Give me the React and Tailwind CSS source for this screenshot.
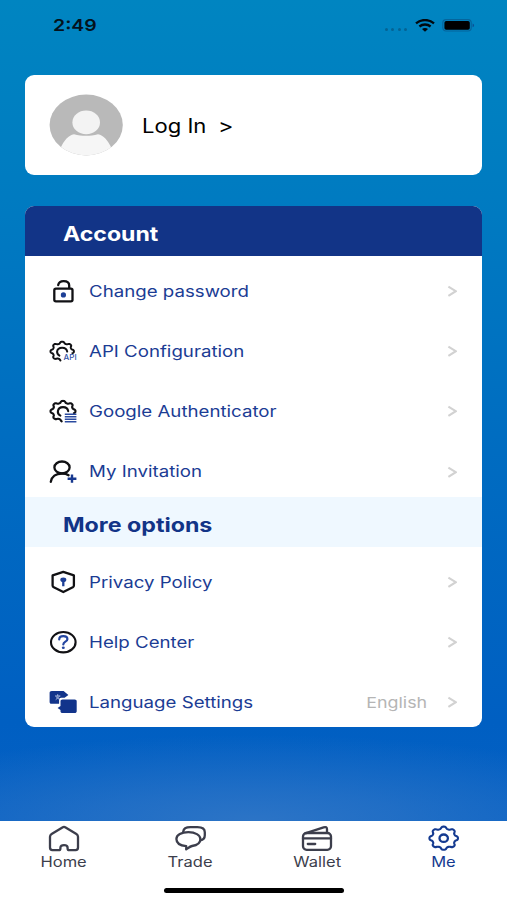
import clsx from "clsx";

// builds a gear outline from `from` to `to` degrees (clockwise, 0 = right)
function gearPath(cx, cy, rx, ry, from = 0, to = 360) {
  const points = [];
  for (let deg = from; deg <= to; deg += 3) {
    const t = (deg * Math.PI) / 180;
    const r = 0.9 + 0.1 * Math.tanh(1.5 * Math.cos(8 * t));
    points.push(`${(cx + rx * r * Math.cos(t)).toFixed(2)} ${(cy + ry * r * Math.sin(t)).toFixed(2)}`);
  }
  return `M${points.join("L")}${to - from >= 360 ? "Z" : ""}`;
}

function RowIcon({ children }) {
  return (
    <svg
      viewBox="0 0 28 24"
      className="h-6 w-7 shrink-0"
      fill="none"
      stroke="#111114"
      strokeWidth="2.3"
      strokeLinecap="round"
      strokeLinejoin="round"
      aria-hidden
    >
      {children}
    </svg>
  );
}

function LockIcon() {
  return (
    <RowIcon>
      <rect x="5.3" y="9.6" width="18.2" height="12.8" rx="1.6" />
      <path d="M9.2 6C9.7 3.6 11.8 2.2 14.6 2.2C18 2.2 20.2 3.9 20.2 6.6V9.2" />
      <circle cx="14.4" cy="15.9" r="2.6" fill="#1d3f96" stroke="none" />
    </RowIcon>
  );
}

function ApiIcon() {
  return (
    <RowIcon>
      <path d={gearPath(13.2, 12.4, 11.8, 9.8, 99, 372)} strokeWidth="2" />
      <path d="M10.4 16.6C8.6 15.6 7.9 14.2 8.1 12.4C8.5 10.1 10.5 8.7 13.1 8.7C15.7 8.7 17.8 10.1 18.2 12.6" strokeWidth="2" />
      <text
        x="14.6"
        y="21"
        fontSize="7.8"
        textLength="13"
        lengthAdjust="spacingAndGlyphs"
        fill="#3152a5"
        stroke="none"
        className="font-['Inter',sans-serif] font-medium"
      >
        API
      </text>
    </RowIcon>
  );
}

function AuthenticatorIcon() {
  return (
    <RowIcon>
      <path d={gearPath(14, 12.2, 12.6, 10.4, 96, 372)} strokeWidth="2.1" />
      <path d="M11.4 16.6C9.4 15.6 8.6 14 8.9 12.2C9.3 9.6 11.4 8.1 14 8.1C16.8 8.1 18.8 9.6 19.2 12.2" strokeWidth="2.1" />
      <path d="M15.8 15.2H27.4M15.8 17.7H27.4M15.8 20.2H27.4M15.8 22.7H27.4" stroke="#2a4a9f" strokeWidth="1.5" strokeLinecap="butt" />
    </RowIcon>
  );
}

function InviteIcon() {
  return (
    <RowIcon>
      <ellipse cx="13" cy="7.4" rx="7.6" ry="5.9" />
      <path d="M1.8 21.8C2.6 16.8 6.8 13.5 13 13.5C15.8 13.5 18 14.1 19.6 15.2" />
      <path d="M23 14.6V22.8M18.6 18.7H27.4" stroke="#17388f" strokeWidth="2.4" strokeLinecap="butt" />
    </RowIcon>
  );
}

function ShieldIcon() {
  return (
    <RowIcon>
      <path d="M14.3 1.9L24.9 5.4V15.4C24.9 16.2 24.5 16.8 23.8 17.2L14.3 22L4.8 17.2C4 16.8 3.6 16.2 3.6 15.4V5.4Z" />
      <ellipse cx="14.3" cy="9.8" rx="3" ry="2.3" fill="#1d3f96" stroke="none" />
      <path d="M14.3 10V16.2" stroke="#1d3f96" strokeWidth="2.3" strokeLinecap="butt" />
    </RowIcon>
  );
}

function HelpIcon() {
  return (
    <RowIcon>
      <ellipse cx="14.3" cy="12.2" rx="12.3" ry="10.2" strokeWidth="2.1" />
      <path d="M10.2 9.4C10.2 7.3 11.8 6.2 14.3 6.2C16.8 6.2 18.4 7.4 18.4 9.2C18.4 11.7 14.3 11.7 14.3 14.4" stroke="#2446a0" strokeWidth="2.2" />
      <ellipse cx="14.3" cy="17.7" rx="1.5" ry="1.3" fill="#2446a0" stroke="none" />
    </RowIcon>
  );
}

function LanguageIcon() {
  return (
    <RowIcon>
      <g fill="#12348b" stroke="none">
        <path d="M2.8 1H14.6L19.4 5L15.6 7.8H12.2C10.8 7.8 10.1 8.6 10.1 9.8V13.8H2.8C1.4 13.8 0.6 13.1 0.6 11.9V2.9C0.6 1.7 1.4 1 2.8 1Z" />
        <path d="M13.6 9.4H25.6C27 9.4 27.7 10.1 27.7 11.3V21.2C27.7 22.4 27 23 25.6 23H13.6C12.2 23 11.5 22.4 11.5 21.2V20L8.6 18L11.5 16V11.3C11.5 10.1 12.2 9.4 13.6 9.4Z" />
      </g>
      <path d="M6.4 6H11M8.7 4.6V6M7 9.4L10.4 6.4M7.2 6.8L10 9.2" stroke="#a9b8dc" strokeWidth="1" />
    </RowIcon>
  );
}

function Chevron() {
  return (
    <svg viewBox="0 0 10 12" className="h-3 w-2.5 shrink-0" fill="none" stroke="#d2d2d2" strokeWidth="2.1" aria-hidden>
      <path d="M1.4 1.6L8.8 6.2L1.4 10.8" />
    </svg>
  );
}

const ACCOUNT_ROWS = [
  { label: "Change password", Icon: LockIcon },
  { label: "API Configuration", Icon: ApiIcon },
  { label: "Google Authenticator", Icon: AuthenticatorIcon },
  { label: "My Invitation", Icon: InviteIcon },
];

const MORE_ROWS = [
  { label: "Privacy Policy", Icon: ShieldIcon },
  { label: "Help Center", Icon: HelpIcon },
  { label: "Language Settings", Icon: LanguageIcon, value: "English" },
];

function MenuRow({ label, Icon, value }) {
  return (
    <li className="flex h-[60.2px] items-center pt-[10px] pr-[25px] pl-6">
      <Icon />
      <span className="mt-px ml-3 origin-left scale-x-[1.205] whitespace-nowrap text-[15.5px] text-[#1b3c94]">
        {label}
      </span>
      <span className="mt-0.5 mr-5 ml-auto origin-right scale-x-[1.19] text-[15px] text-[#b5b5b5]">{value}</span>
      <Chevron />
    </li>
  );
}

function StatusBar() {
  return (
    <div className="flex h-[50px] items-center justify-between pr-8 pl-[53px]">
      <span className="origin-left scale-x-[1.18] text-[16.5px] font-semibold text-[#04121c]">2:49</span>
      <div className="flex items-center">
        <div className="mt-2 mr-2 flex gap-[3.5px]">
          {[0, 1, 2, 3].map((n) => (
            <span key={n} className="h-[3px] w-[3px] rounded-full bg-[#046394]" />
          ))}
        </div>
        <svg viewBox="0 0 20 13" className="h-[13px] w-5" fill="none" stroke="#02090f" strokeWidth="2.3" aria-hidden>
          <path d="M1 4.4C6 -0.1 14 -0.1 19 4.4" />
          <path d="M4.4 7.5C7.6 4.8 12.4 4.8 15.6 7.5" />
          <path d="M7 10L10 12.8L13 10C11.4 8.6 8.6 8.6 7 10Z" fill="#02090f" stroke="none" />
        </svg>
        <svg viewBox="0 0 33 13" className="ml-[7px] h-[13px] w-[33px]" aria-hidden>
          <rect x="0.8" y="0.6" width="28.4" height="11.4" rx="3.2" fill="none" stroke="#05659c" strokeWidth="1.2" />
          <rect x="2.4" y="1.9" width="25.4" height="8.8" rx="1.8" fill="#000" />
          <path d="M30.6 4.4C32.6 5 32.6 7.6 30.6 8.2Z" fill="#0a4f96" />
        </svg>
      </div>
    </div>
  );
}

function Avatar() {
  return (
    <svg viewBox="0 0 74 62" className="h-[62px] w-[74px] shrink-0" aria-hidden>
      <clipPath id="avatar">
        <ellipse cx="37.2" cy="31" rx="36.6" ry="30.4" />
      </clipPath>
      <g clipPath="url(#avatar)">
        <rect width="74" height="62" fill="#b9b9b9" />
        <path d="M12 53C15 46.4 19.6 41.4 25 40.2C29 41.2 33 41.8 37 41.8C41 41.8 45 41.2 49 40.2C54.4 41.4 59 46.4 62 53V62H12Z" fill="#f6f6f6" />
      </g>
      <ellipse cx="37.2" cy="28.4" rx="13.8" ry="11.9" fill="#f3f3f3" />
    </svg>
  );
}

function TabIcon({ children }) {
  return (
    <svg
      viewBox="0 0 32 28"
      className="h-7 w-8"
      fill="none"
      stroke="currentColor"
      strokeWidth="2.3"
      strokeLinecap="round"
      strokeLinejoin="round"
      aria-hidden
    >
      {children}
    </svg>
  );
}

const TABS = [
  {
    label: "Home",
    icon: (
      <path d="M14.4 3.4C15.4 2.8 16.6 2.8 17.6 3.4L28.4 10C29.6 10.8 30 11.6 30 12.8V23.6C30 25.4 29.2 26.2 27.6 26.2H21.4C20.1 26.2 19.6 25.6 19.6 24.4V23.8C19.6 22 18.2 21.2 16 21.2C13.8 21.2 12.4 22 12.4 23.8V24.4C12.4 25.6 11.9 26.2 10.6 26.2H4.4C2.8 26.2 2 25.4 2 23.6V12.8C2 11.6 2.4 10.8 3.6 10Z" />
    ),
  },
  {
    label: "Trade",
    icon: (
      <>
        <path d="M13.4 8.2C20.2 8.2 25.4 11 25.4 15.2C25.4 18.8 22 21.2 17 22C15 22.4 14 23.4 11.2 25.4V22.2C5.2 21.6 1.4 18.8 1.4 15C1.4 11 6.4 8.2 13.4 8.2Z" />
        <path d="M8.2 7.6C8.6 4.6 11.4 3.2 15.4 3.2H22.4C27 3.2 29.8 5 29.8 8.2V11.2C29.8 14 28 15.8 25.2 16.4" />
      </>
    ),
  },
  {
    label: "Wallet",
    icon: (
      <>
        <rect x="2" y="9" width="28" height="16.8" rx="3.6" />
        <path d="M2 14.4H30M6.8 20H14.2" />
        <path d="M5 9.2L22.6 3.3C25 2.6 26 3.4 26 5.2V8.6" />
      </>
    ),
  },
  {
    label: "Me",
    active: true,
    icon: (
      <>
        <path d={gearPath(15.7, 14.2, 14.4, 11.7)} strokeWidth="2.1" />
        <ellipse cx="15.7" cy="14.2" rx="4.2" ry="3.7" />
      </>
    ),
  },
];

function TabBar() {
  return (
    <nav className="relative flex h-[79px] bg-white">
      {TABS.map(({ label, icon, active }) => (
        <button
          key={label}
          type="button"
          className={clsx(
            "flex flex-1 flex-col items-center pt-[3px] pl-px",
            active ? "text-[#143a90]" : "text-[#3c3e4c]"
          )}
        >
          <TabIcon>{icon}</TabIcon>
          <span className="mt-px mr-px scale-x-[1.18] text-[14px] leading-[18px]">{label}</span>
        </button>
      ))}
      <div className="absolute bottom-[7.5px] left-[164px] h-[5px] w-[180px] rounded-full bg-black" />
    </nav>
  );
}

export default function App() {
  return (
    <div className="flex h-[900px] w-full flex-col overflow-hidden bg-white font-['Inter',sans-serif]">
      <main className="flex-1 bg-[radial-gradient(ellipse_85%_10.5%_at_50%_100%,#2c74c6_0%,#2c74c6b3_35%,#2c74c600_100%),linear-gradient(to_bottom,#0085c1_0%,#007bc1_24%,#006cc1_55%,#005fc2_88%,#0660c4_100%)]">
        <StatusBar />

        <section className="mx-[25.3px] mt-[25.4px] flex h-[100px] items-center rounded-[9px] bg-white pl-6">
          <Avatar />
          <button type="button" className="mt-0.5 ml-[19px] flex text-[19.5px] text-black">
            <span className="w-[75.5px] text-left">
              <span className="inline-block origin-left scale-x-[1.13]">Log In</span>
            </span>
            <span className="origin-left scale-x-[1.2]">&gt;</span>
          </button>
        </section>

        <section className="mx-[25.3px] mt-[30.5px] overflow-hidden rounded-[9px] bg-white">
          <h2 className="flex h-[50px] items-center bg-[#123487] pt-[7px] pl-[37.5px] text-[19.5px] font-bold text-white">
            <span className="origin-left scale-x-[1.185]">Account</span>
          </h2>
          <ul>
            {ACCOUNT_ROWS.map((row) => (
              <MenuRow key={row.label} {...row} />
            ))}
          </ul>
          <h2 className="flex h-[50px] items-center bg-[#eff8ff] pt-[7px] pl-[37.5px] text-[19.5px] font-bold text-[#123487]">
            <span className="origin-left scale-x-[1.19]">More options</span>
          </h2>
          <ul>
            {MORE_ROWS.map((row) => (
              <MenuRow key={row.label} {...row} />
            ))}
          </ul>
        </section>
      </main>
      <TabBar />
    </div>
  );
}
